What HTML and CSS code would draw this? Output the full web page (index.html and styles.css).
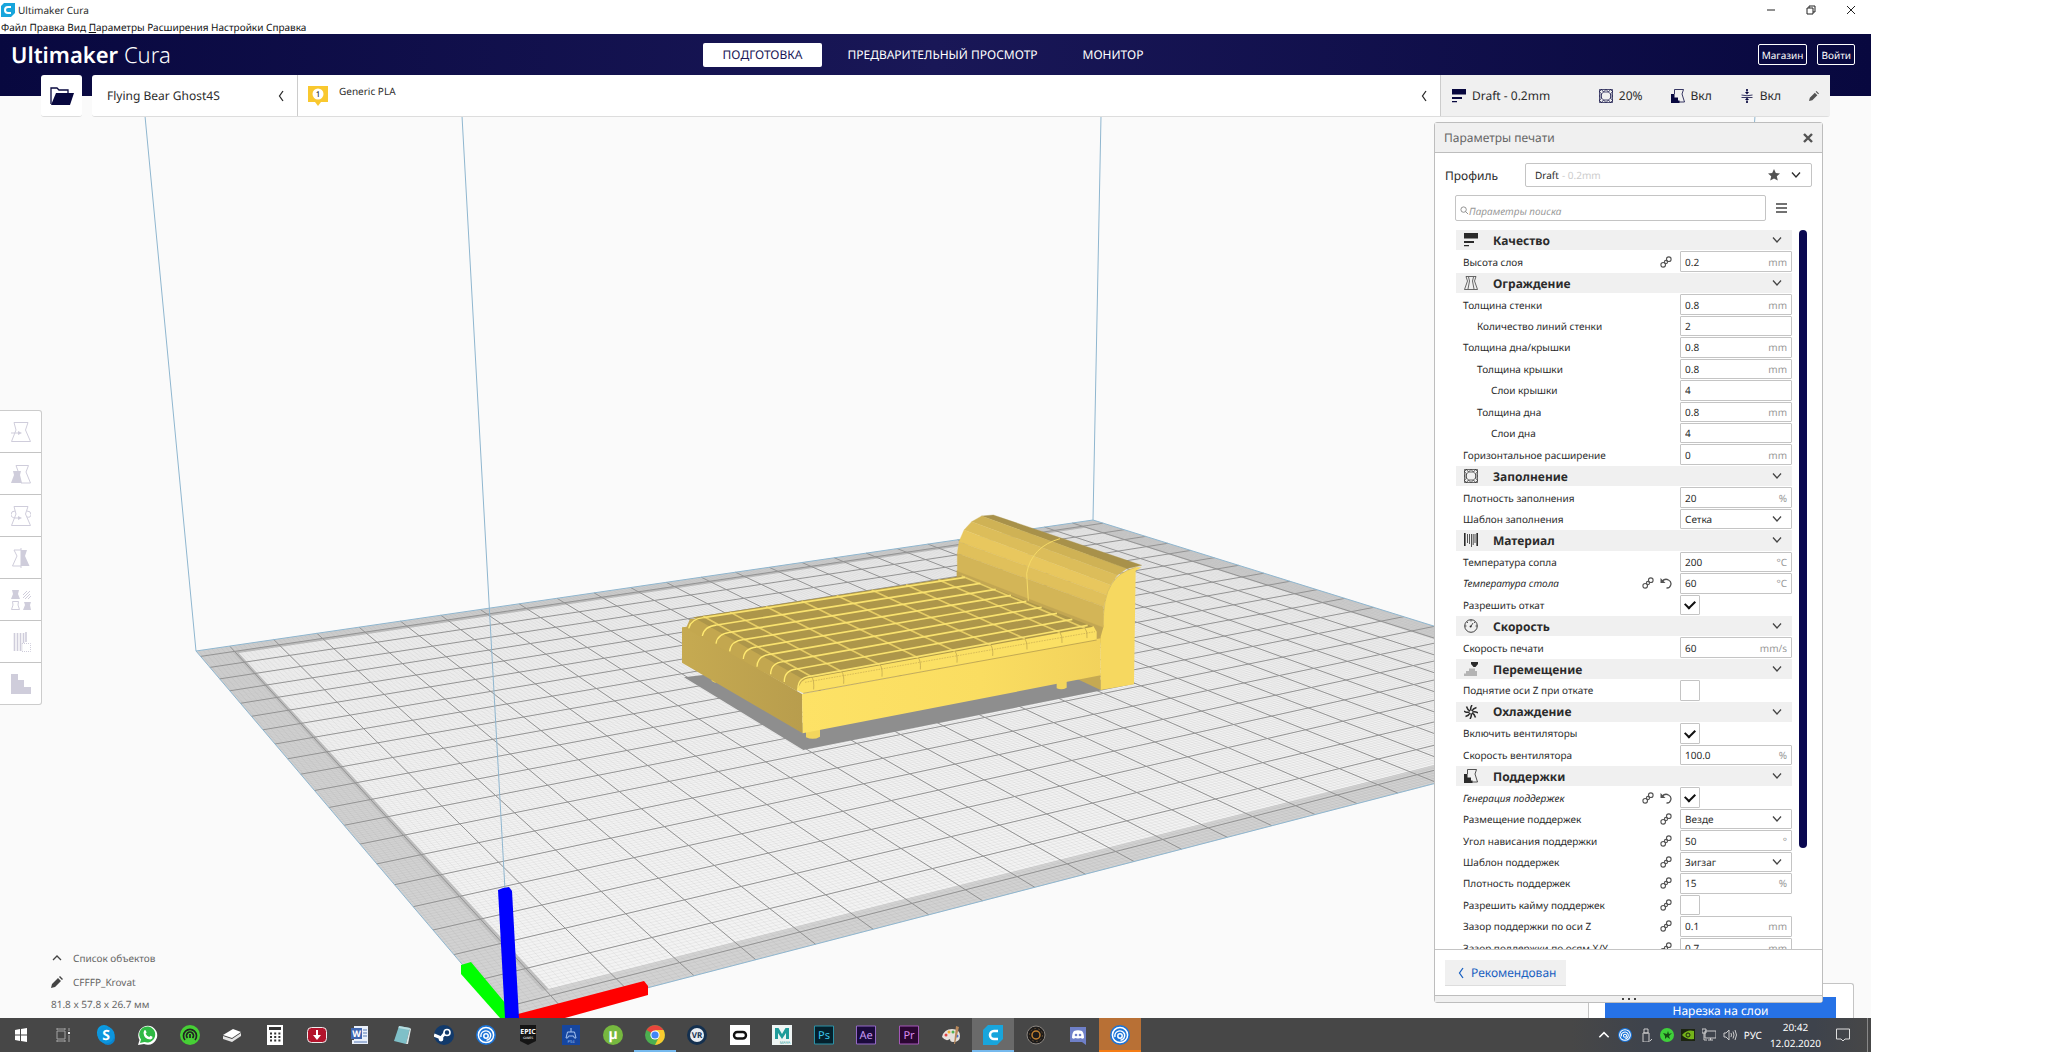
FILE: index.html
```html
<!DOCTYPE html>
<html lang="ru">
<head>
   <meta charset="UTF-8">
   <meta name="viewport" content="width=device-width, initial-scale=1.0">
   <title>Ultimaker Cura</title>
   <link rel="stylesheet" href="styles.css">
</head>
<body>
   <!-- Shared icons -->
   <svg class="sprite" aria-hidden="true">
       <symbol id="i-down" viewBox="0 0 12 12"><path d="M2 3.500l4 4.500 4-4.500" fill="none" stroke="currentColor" stroke-width="1.300"/></symbol>
       <symbol id="i-up" viewBox="0 0 12 12"><path d="M2 8l4-4 4 4" fill="none" stroke="currentColor" stroke-width="1.300"/></symbol>
       <symbol id="i-left" viewBox="0 0 12 12"><path d="M8 1L4.500 6l3.500 5" fill="none" stroke="currentColor" stroke-width="1.300"/></symbol>
       <symbol id="i-layers" viewBox="0 0 14 14"><path d="M0 0h14v5.500H0zM0 8h10v2H0zM0 12h5v1.200H0z" fill="currentColor"/></symbol>
       <symbol id="i-shell" viewBox="0 0 14 14"><path d="M2 .5h10L10.500 5l3 8.500H.5l3-8.500zM4.500 1L5.500 5 4 13M9.500 1l-1 4L10 13" fill="none" stroke="currentColor" stroke-width=".7"/></symbol>
       <symbol id="i-infill" viewBox="0 0 14 14"><path d="M.5.5h13v13H.5zM4.500 3h5L11.500 5v4L9.500 11h-5L2.500 9V5zM.5 2.500L2.500.5M11.500.5l2 2M.5 11.500l2 2M13.500 11.500l-2 2M2.500.5l2 2.500M7 .5L4.500 3M7 .5L9.500 3M11.500.5l-2 2.500M.5 2.500l2 2.500M.5 7l2-2M.5 7l2 2M.5 11.500l2-2.500M13.500 2.500l-2 2.500M13.500 7l-2-2M13.500 7l-2 2M13.500 11.500l-2-2.500M2.500 13.500l2-2.500M7 13.500L4.500 11M7 13.500L9.500 11M11.500 13.500l-2-2.500" fill="none" stroke="currentColor" stroke-width=".7"/></symbol>
       <symbol id="i-material" viewBox="0 0 14 14"><path d="M.8 0v13M13.200 0v13" stroke="currentColor" stroke-width="1.600"/><path d="M3.500 1v9M5.500 1v10M7.500 1v13M9.200 1v11M11 1v9" stroke="currentColor" stroke-width=".8"/></symbol>
       <symbol id="i-speed" viewBox="0 0 14 14"><circle cx="7" cy="7" r="6.300" fill="none" stroke="currentColor" stroke-width=".9"/><path d="M6.500 8l2.500-4M7 1v1.500M1 7h1.500M11.500 7H13M3 3l1 1M11 3l-1 1" stroke="currentColor" stroke-width=".8"/><circle cx="6.600" cy="7.500" r="1" fill="currentColor"/></symbol>
       <symbol id="i-travel" viewBox="0 0 14 14"><path d="M7 0h7v2l-2.500 3h-2L7 2z" fill="currentColor"/><path d="M0 14v-2.500h2V9h3V6.500h6V9h2v5z" fill="#b4b4b4"/></symbol>
       <symbol id="i-fan" viewBox="0 0 14 14"><path d="M7 5.500Q6 3 8 0M8 6q1-2.500 4.500-3.500M8.500 7q2.500-1 5.500 1M8 8q2.500 1 3.500 4.500M7 8.500q1 2.500-1 5.500M6 8q-1 2.500-4.500 3.500M5.500 7Q3 8 0 6M6 6Q3.500 5 2.500 1.500" fill="none" stroke="currentColor" stroke-width="1.500"/></symbol>
       <symbol id="i-support" viewBox="0 0 14 14"><path d="M3.500 5V.5h9L11 5l2.500 8H8" fill="none" stroke="currentColor" stroke-width=".8"/><path d="M0 5h3.500v3.500H7v3h1.500V14H0z" fill="currentColor"/></symbol>
       <symbol id="i-adhesion" viewBox="0 0 14 14"><path d="M7 0v4M7 10v4M1.500 6q5.500 1.500 11 0M1.500 8.500h11" fill="none" stroke="currentColor" stroke-width=".8"/><path d="M5 3h4L7 5.500zM5 11h4L7 8.500z" fill="currentColor"/><circle cx="7" cy="1" r="1" fill="currentColor"/><circle cx="7" cy="13" r="1" fill="currentColor"/></symbol>
       <symbol id="i-link" viewBox="0 0 12 12"><g fill="none" stroke="currentColor" stroke-width="1.100"><circle cx="3.200" cy="8.800" r="2.300"/><circle cx="8.800" cy="3.200" r="2.300"/><circle cx="6" cy="6" r="1.600"/></g></symbol>
       <symbol id="i-undo" viewBox="0 0 12 12"><path d="M2 4.500Q5 1 8.500 3a4.200 4.200 0 0 1-2 8" fill="none" stroke="currentColor" stroke-width="1.300"/><path d="M.5 1v5h5z" fill="currentColor"/></symbol>
       <symbol id="i-pencil" viewBox="0 0 12 12"><path d="M0 12l1-4 6-6 3 3-6 6zM8 1l1-1 3 3-1 1z" fill="currentColor"/></symbol>
       <symbol id="i-ubi" viewBox="0 0 20 20"><circle cx="10" cy="10" r="10" fill="#1b74d8"/><g fill="none" stroke="#fff" stroke-width="1.500"><circle cx="10" cy="10" r="7.600"/><path d="M5 12a5 5 0 0 1 9.500-3 5 5 0 0 1-4 6.300"/><circle cx="10" cy="11" r="2.200"/></g></symbol>
   </svg>

   <div class="app">
       <!-- 3D view: the lines of the plate and the mattress come from script.js -->
       <svg class="scene" viewBox="0 0 1871 1018" preserveAspectRatio="xMidYMid slice" aria-hidden="true">
           <polygon id="plate" fill="#d2d2d2"/>
           <polygon id="plateShade" fill="#c2c2c2"/>
           <polygon id="plateInner" fill="#f3f3f3"/>
           <path id="minor" class="minor"/>
           <path id="major" class="major"/>
           <polygon id="plateEdge" class="volume"/>
           <g transform="translate(660 490) scale(.33333)">
               <polygon points="72,562 155,552 430,700 1230,560 1432,580 430,780" fill="#8e8e8e"/>
               <path d="M155 566l12 8v5l-12-6zM438 715h42v25q-20 12-42 2zM1190 565h30v28q-14 8-30 2z" fill="#f3d65d"/>
               <polygon points="1250,566 1322,550 1322,600" fill="#c5a952"/>
               <polygon points="890,240 1332,405 1332,460 1290,455 890,275" fill="#c2a652"/>
               <polygon points="66,412 80,410 426,612 428,730 66,518" fill="url(#sideFill)"/>
               <polygon points="426,612 1322,445 1322,556 428,730" fill="url(#frontFill)"/>
               <polygon points="130,383 90,387 78,415 410,603 455,560" fill="#c3a74f"/>
               <polygon points="455,555 1300,408 1310,425 1310,450 430,610 410,600 425,575" fill="#fbe064"/>
               <path d="M430 610L1310 450" stroke="#a8904a" stroke-width="2"/>
               <path d="M435 577L1305 425" stroke="#c5a952" stroke-width="2" stroke-dasharray="5 3"/>
               <polygon points="100,382 905,258 1300,410 430,568" fill="#ad964a"/>
               <path id="cross" fill="none" stroke="#e6cc64" stroke-width="5"/>
               <path id="quilt" fill="none" stroke="#f9e26e" stroke-width="5"/>
               <path id="seams" fill="none" stroke="#b79d4c" stroke-width="2"/>
               <path id="folds" fill="none" stroke="#ffe970" stroke-width="4"/>
               <g id="headboard"></g>
               <path d="M1105 332L1100 250Q1115 170 1200 146" fill="none" stroke="#f5db68" stroke-width="3"/>
               <path d="M1322 600V440l8-28q-2-90 25-130 20-35 72-50h18l-18 10-5 341z" fill="#f6d860"/>
               <path d="M1330 412q-2-90 25-130 20-35 72-50" fill="none" stroke="#d2b557" stroke-width="2"/>
           </g>
           <defs>
               <linearGradient id="sideFill"><stop offset="0" stop-color="#c6aa51"/><stop offset="1" stop-color="#b89d4d"/></linearGradient>
               <linearGradient id="frontFill"><stop offset="0" stop-color="#fde266"/><stop offset=".6" stop-color="#fadd61"/><stop offset="1" stop-color="#f2d25c"/></linearGradient>
           </defs>
           <path class="volume" d="M196 651L145 116M505 890L462 116M1093 520L1101 116M1710 712L1755 116"/>
           <polygon points="461,965 471,962 506,1004 506,1018 500,1018 461,974" fill="#0f0"/>
           <polygon points="518,1014 644,981 648,986 648,995 565,1018 518,1018" fill="red"/>
           <polygon points="498,890 503,888 509,887 512,891 519,1018 505,1018" fill="#00f"/>
       </svg>

       <!-- Window title and menu -->
       <div class="titlebar">
           <svg class="logo" viewBox="0 0 14 14"><path d="M3 0h11v10l-4 4H0V3z" fill="#18a5dc"/><path d="M10 4H7a3 3 0 0 0 0 6h3" fill="none" stroke="#fff" stroke-width="2"/></svg>
           <span>Ultimaker Cura</span>
           <div class="window-buttons">
               <button aria-label="Свернуть"><svg viewBox="0 0 10 10"><path d="M1 5h8"/></svg></button>
               <button aria-label="Развернуть"><svg viewBox="0 0 10 10"><path d="M1 3h6v6H1zM3 3V1h6v6H7"/></svg></button>
               <button aria-label="Закрыть"><svg viewBox="0 0 10 10"><path d="M1 1l8 8M9 1L1 9"/></svg></button>
           </div>
       </div>
       <nav class="menu">
           <a href="#">Файл</a> <a href="#">Правка</a> <a href="#">Вид</a> <a href="#"><u>П</u>араметры</a> <a href="#">Расширения</a> <a href="#">Настройки</a> <a href="#">Справка</a>
       </nav>

       <header class="header">
           <div class="brand"><b>Ultimaker</b> Cura</div>
           <nav class="stages">
               <a class="active" href="#">ПОДГОТОВКА</a>
               <a href="#">ПРЕДВАРИТЕЛЬНЫЙ ПРОСМОТР</a>
               <a href="#">МОНИТОР</a>
           </nav>
           <div class="account">
               <button>Магазин</button>
               <button>Войти</button>
           </div>
       </header>

       <!-- Printer, material and print settings summary -->
       <div class="stagebar">
           <button class="open" aria-label="Открыть файл"><svg viewBox="0 0 24 18"><path d="M1 17V1h6l2 2h9v3" fill="none" stroke="#08083f" stroke-width="1.300"/><path d="M6 6h18l-4 12H1z" fill="#08083f"/></svg></button>
           <div class="stagecard">
               <button class="printer">Flying Bear Ghost4S <svg><use href="#i-left"/></svg></button>
               <button class="material">
                   <svg class="extruder" viewBox="0 0 20 20"><path d="M0 0h20v16h-7l-3 4-3-4H0z" fill="#f9c82f"/><circle cx="10" cy="8" r="5.500" fill="#fff"/><text x="10" y="11" text-anchor="middle">1</text></svg>
                   <span>Generic PLA</span>
                   <svg><use href="#i-left"/></svg>
               </button>
               <button class="summary">
                   <span class="profile-item"><svg><use href="#i-layers"/></svg>Draft - 0.2mm</span>
                   <span><svg><use href="#i-infill"/></svg>20%</span>
                   <span><svg><use href="#i-support"/></svg>Вкл</span>
                   <span><svg><use href="#i-adhesion"/></svg>Вкл</span>
                   <svg class="pencil"><use href="#i-pencil"/></svg>
               </button>
           </div>
       </div>

       <!-- Tools on the left -->
       <div class="tools">
           <button aria-label="Перемещение"><svg viewBox="0 0 20 20"><path d="M3 .5h14L14.500 8l5 11.500H.5L5 8z"/><path d="M0 11h9"/><path class="fill" d="M7 9l4 2-4 2z"/></svg></button>
           <button aria-label="Масштаб"><svg viewBox="0 0 20 20"><path d="M5 1.500h12.500L15 8l4.500 11H10M5 1.500L7 7"/><path class="fill" d="M2 7h8L9 11l2 8H0l3-8z"/></svg></button>
           <button aria-label="Поворот"><svg viewBox="0 0 20 20"><path d="M3 .5h14L14.500 8l5 11.500H.5L5 8zM4 5Q0 5 0 8.500T5 12h4M16 5q4 0 4 3.500T16 11"/><path class="fill" d="M7 10l4 2-4 2z"/></svg></button>
           <button aria-label="Зеркало"><svg viewBox="0 0 20 20"><path d="M10 0v20M10 2H3l3 6-4.500 10H10"/><path class="fill" d="M10 2h6l-2 6 4.500 10H10z"/></svg></button>
           <button aria-label="Параметры модели"><svg viewBox="0 0 20 20"><path class="fill" d="M1 0h7L7 4l2 5H0l2-5zM13 12h7l-1 3 1 5h-8l2-5z"/><path d="M1.500 11.500h6L7 15l1.500 4.500h-8L2 15zM12 5l4-4M12 8l7-7M14 9l5-5M17 9l3-3"/></svg></button>
           <button aria-label="Блокировка поддержек"><svg viewBox="0 0 20 20"><path d="M3.500 1v18M6.500 1v18M9.500 1v18M12.500 1v10M15 0v10" stroke-width="1.600"/><path d="M11 11.500h8.500v8H11z" stroke-dasharray="1 1"/></svg></button>
           <button aria-label="Поддержки"><svg viewBox="0 0 20 20"><path class="fill" d="M0 0h7v6h6v7h7v7H0z"/></svg></button>
       </div>

       <div class="objects">
           <button><svg><use href="#i-up"/></svg>Список объектов</button>
           <button><svg><use href="#i-pencil"/></svg>CFFFP_Krovat</button>
           <p>81.8 x 57.8 x 26.7 мм</p>
       </div>

       <div class="slice">
           <button>Нарезка на слои</button>
       </div>

       <!-- Print settings window -->
       <section class="panel">
           <div class="panel-title">
               <h2>Параметры печати</h2>
               <button aria-label="Закрыть"><svg viewBox="0 0 10 10"><path d="M1 1l8 8M9 1L1 9" stroke="#535353" stroke-width="2.400"/></svg></button>
           </div>
           <div class="profile">
               <label for="profile">Профиль</label>
               <div class="combo">
                   <select id="profile"><option>Draft</option></select>
                   <span>- 0.2mm</span>
                   <svg class="star" viewBox="0 0 12 12"><path d="M6 0l1.800 4 4.200.4-3.200 2.900 1 4.300L6 9.400l-3.800 2.200 1-4.300L0 4.400 4.200 4z" fill="#535353"/></svg>
                   <svg><use href="#i-down"/></svg>
               </div>
           </div>
           <div class="search">
               <div class="searchbox">
                   <svg viewBox="0 0 10 10"><circle cx="4" cy="4" r="3" fill="none" stroke="#888"/><path d="M6 6l3 3" stroke="#888"/></svg>
                   <input type="text" placeholder="Параметры поиска" aria-label="Параметры поиска">
               </div>
               <button aria-label="Видимость параметров"><svg viewBox="0 0 12 12"><path d="M0 2h11M0 6h11M0 10h11" stroke="#444" stroke-width="1.500"/></svg></button>
           </div>
           <div class="viewport">
               <div class="settings" id="settings"></div>
               <div class="scrollbar"><div class="thumb"></div></div>
           </div>
           <div class="panel-footer">
               <button><svg><use href="#i-left"/></svg>Рекомендован</button>
           </div>
           <div class="grip"><i></i><i></i><i></i></div>
       </section>
   </div>

   <!-- Windows taskbar -->
   <footer class="taskbar">
       <div class="apps">
           <button aria-label="Пуск"><svg viewBox="0 0 20 20"><path d="M4 5l5-1v5.500H4zM10 4l6-1v6.500h-6zM4 10.500h5V16l-5-1zM10 10.500h6V17l-6-1z" fill="#fff"/></svg></button>
           <button aria-label="Представление задач"><svg viewBox="0 0 20 20"><path d="M4 6h8v8H4zM4 3v2M12 3v2M4 15v2M12 15v2M4 4h8M4 16h8M16 3v3M16 10v7" fill="none" stroke="#a5a5a5"/><path d="M15 7h2v2h-2z" fill="#eee"/></svg></button>
           <button aria-label="Skype"><svg viewBox="0 0 20 20"><rect x="1" width="14" height="15" rx="7" fill="#0a9de3"/><rect x="5" y="5" width="14" height="15" rx="7" fill="#0a84cf"/><circle cx="10" cy="10" r="8.500" fill="#0c95dd"/><text x="10" y="15" font-size="14" text-anchor="middle" fill="#fff" font-weight="700">S</text></svg></button>
           <button aria-label="WhatsApp"><svg viewBox="0 0 20 20"><path d="M0 20l1.500-5A9.500 9.500 0 1 1 6 19z" fill="#fff"/><path d="M2 18l1-3.500A8 8 0 1 1 6.500 17z" fill="#2fb944"/><path d="M6 6q1-2 2 0l.6 1.500-1 1.200q1.200 2.300 3.600 3.300l1.300-1.300 2 1q.5 2-2 2.800Q6 14 5.500 8z" fill="#fff"/></svg></button>
           <button aria-label="Razer Cortex"><svg viewBox="0 0 20 20"><circle cx="10" cy="10" r="10" fill="#46cf35"/><path d="M5 15a6.500 6.500 0 1 1 10 0M7.500 13a3.500 3.500 0 1 1 5 0M10 9v4" fill="none" stroke="#222" stroke-width="1.700"/></svg></button>
           <button aria-label="Хранилище"><svg viewBox="0 0 20 20"><path d="M1 10l10-6 8 3-9 6z" fill="#fff"/><path d="M1 11l9 3 9-6v3l-9 6-9-3z" fill="#e4e4e4"/></svg></button>
           <button aria-label="Калькулятор"><svg viewBox="0 0 20 20"><path d="M2 0h16v20H2z" fill="#fff"/><path d="M4 2h12v3H4z" fill="#333"/><path d="M5 8.500h11M5 12h11M5 15.500h11" stroke="#333" stroke-width="2" stroke-dasharray="2 2.200"/></svg></button>
           <button aria-label="Загрузки"><svg viewBox="0 0 20 20"><rect x=".5" y="2.500" width="19" height="15" rx="4" fill="#b3142c" stroke="#eee"/><path d="M9 5h2v5h3l-4 5-4-5h3z" fill="#fff"/></svg></button>
           <button aria-label="Word"><svg viewBox="0 0 20 20"><path d="M5 1h14v18H3v-4h2z" fill="#eaf0fa"/><path d="M14 5h4M14 8h4M14 11h4M5 17h13" stroke="#5678b5"/><path d="M2 3h11v11H2z" fill="#3f66b0"/><text x="7.500" y="12" font-size="9" text-anchor="middle" fill="#fff" font-weight="700">W</text></svg></button>
           <button aria-label="Блокнот"><svg viewBox="0 0 20 20"><path d="M7 1l11 2-4 16-12-3z" fill="#7fc0c8"/><path d="M14 19l4-16 1 1-3 15z" fill="#dfe9e9"/><path d="M7 1l11 2-.5 2L6.500 3z" fill="#b8dde0"/></svg></button>
           <button aria-label="Steam"><svg viewBox="0 0 20 20"><circle cx="10" cy="10" r="10" fill="#123a6b"/><path d="M0 10l7 3 4-5" fill="none" stroke="#fff" stroke-width="3"/><circle cx="13" cy="7.500" r="3" fill="#123a6b" stroke="#fff" stroke-width="1.600"/><circle cx="7" cy="14" r="2.400" fill="#fff"/></svg></button>
           <button aria-label="Uplay"><svg><use href="#i-ubi"/></svg></button>
           <button aria-label="Epic Games"><svg viewBox="0 0 20 20"><path d="M2 0h16v16l-8 4-8-4z" fill="#151515"/><text x="10" y="9" font-size="7" text-anchor="middle" fill="#fff" font-weight="700">EPIC</text><text x="10" y="14" font-size="3" text-anchor="middle" fill="#fff">GAMES</text></svg></button>
           <button aria-label="PS4 Remote Play"><svg viewBox="0 0 20 20"><path d="M1 0h18v20H1z" fill="#1646a0"/><path d="M5 13l1.500-6h7l1.500 6q-2 1-2.500-2h-5Q7 14 5 13zM10 3v4" fill="none" stroke="#a8c4f0"/><text x="10" y="18" font-size="4" text-anchor="middle" fill="#a8c4f0">PS4</text></svg></button>
           <button aria-label="uTorrent"><svg viewBox="0 0 20 20"><circle cx="10" cy="10" r="10" fill="#76b83f"/><text x="10" y="14" font-size="14" text-anchor="middle" fill="#fff" font-weight="700">µ</text></svg></button>
           <button class="running" aria-label="Chrome"><svg viewBox="0 0 20 20"><circle cx="10" cy="10" r="10" fill="#4caf50"/><path d="M10 10L1.500 5A10 10 0 0 1 18.500 5z" fill="#e8453c"/><path d="M10 5h8.500A10 10 0 0 1 10 20l4-8z" fill="#f9cb2f"/><circle cx="10" cy="10" r="4.600" fill="#fff"/><circle cx="10" cy="10" r="3.600" fill="#4285f4"/></svg></button>
           <button aria-label="VR"><svg viewBox="0 0 20 20"><circle cx="10" cy="10" r="10" fill="#14304f"/><circle cx="10" cy="10" r="7" fill="#e8edf2"/><text x="10" y="13" font-size="8" text-anchor="middle" fill="#14304f" font-weight="700">VR</text></svg></button>
           <button aria-label="Oculus"><svg viewBox="0 0 20 20"><path d="M0 0h20v20H0z" fill="#fff"/><rect x="4" y="7" width="12" height="6.500" rx="3.200" fill="none" stroke="#111" stroke-width="2.400"/></svg></button>
           <button aria-label="Maya"><svg viewBox="0 0 20 20"><path d="M0 0h20v20H0z" fill="#eef4f3"/><path d="M3 14V3h3.500L10 9l3.500-6H17v11h-3V8l-4 6-4-6v6z" fill="#1f9b99"/><text x="13" y="19" font-size="4" text-anchor="middle" fill="#1f9b99">MAYA</text></svg></button>
           <button aria-label="Photoshop"><svg viewBox="0 0 20 20"><path d="M.5 1h19v18H.5z" fill="#04202c" stroke="#2a93a8"/><text x="10" y="14" font-size="11" text-anchor="middle" fill="#3cc5e8">Ps</text></svg></button>
           <button aria-label="After Effects"><svg viewBox="0 0 20 20"><path d="M.5 1h19v18H.5z" fill="#1b0a3c" stroke="#9468c8"/><text x="10" y="14" font-size="11" text-anchor="middle" fill="#c99cf5">Ae</text></svg></button>
           <button aria-label="Premiere"><svg viewBox="0 0 20 20"><path d="M.5 1h19v18H.5z" fill="#2b0632" stroke="#a455b8"/><text x="10" y="14" font-size="11" text-anchor="middle" fill="#d98cf0">Pr</text></svg></button>
           <button aria-label="Paint"><svg viewBox="0 0 20 20"><path d="M1 12Q3 4 11 4q8 0 8 7 0 6-7 6-3 0-3-3-4 3-8-2z" fill="#e6e1dc"/><circle cx="5" cy="10" r="1.500" fill="#e04040"/><circle cx="8" cy="7" r="1.500" fill="#f0b030"/><circle cx="12" cy="7" r="1.500" fill="#50b050"/><circle cx="16" cy="11" r="1.500" fill="#4070d0"/><path d="M15 1l3 1-4 17h-1z" fill="#b9885a"/></svg></button>
           <button class="running current" aria-label="Cura"><svg viewBox="0 0 20 20"><path d="M5 0h15v14l-6 6H0V5z" fill="#18a5dc"/><path d="M15 6h-4a4 4 0 0 0 0 8h4" fill="none" stroke="#fff" stroke-width="2.600"/></svg></button>
           <button aria-label="Камера"><svg viewBox="0 0 20 20"><circle cx="10" cy="10" r="9" fill="#1d1b1a" stroke="#8a8580"/><circle cx="10" cy="10" r="4" fill="none" stroke="#c08030" stroke-width="1.500"/><circle cx="10" cy="10" r="6.500" fill="none" stroke="#5a4630" stroke-dasharray="2 2"/></svg></button>
           <button aria-label="Discord"><svg viewBox="0 0 20 20"><path d="M2 2h16v18l-4-3H2z" fill="#6f80c8"/><path d="M4 13q0-5 2-7 4-1.500 8 0 2 2 2 7-2 1.500-3 0-3 .8-6 0-1 1.500-3 0z" fill="#fff"/><circle cx="8" cy="10" r="1.300" fill="#6f80c8"/><circle cx="12" cy="10" r="1.300" fill="#6f80c8"/></svg></button>
           <button class="alert" aria-label="Uplay"><svg><use href="#i-ubi"/></svg></button>
       </div>
       <div class="tray">
           <button aria-label="Скрытые значки"><svg><use href="#i-up"/></svg></button>
           <button aria-label="Uplay"><svg><use href="#i-ubi"/></svg></button>
           <button aria-label="USB"><svg viewBox="0 0 14 14"><path d="M4 5h6v9H4zM5 1h4v4H5zM11 13l2-2" fill="none" stroke="#ccc"/></svg></button>
           <button aria-label="Razer"><svg viewBox="0 0 14 14"><circle cx="7" cy="7" r="7" fill="#3fd03a"/><path d="M3 5l4 1 1-3 1 3 3-1-3 3 1 3-3-2-2 2V8z" fill="#164d14"/></svg></button>
           <button aria-label="NVIDIA"><svg viewBox="0 0 14 14"><path d="M0 1h14v12H0z" fill="#1c2410"/><path d="M1 7q5-6 12-4v8Q5 12 1 7z" fill="#74b21a"/><circle cx="7" cy="7" r="2" fill="none" stroke="#1c2410"/></svg></button>
           <button aria-label="Сеть"><svg viewBox="0 0 14 14"><path d="M3 3h11v7H3zM6 12h5M8.500 10v2M0 1h4v4H0zM2 5v7h3" fill="none" stroke="#ccc"/></svg></button>
           <button aria-label="Звук"><svg viewBox="0 0 14 14"><path d="M1 5h2l3-3v10L3 9H1zM8 5q1 2 0 4M10 3.500q2 3.500 0 7M12 2q3 5 0 10" fill="none" stroke="#ccc"/></svg></button>
           <button class="lang">РУС</button>
           <button class="clock"><span>20:42</span><span>12.02.2020</span></button>
           <button class="notes" aria-label="Уведомления"><svg viewBox="0 0 14 14"><path d="M.5 1h13v10H9l-2 2-2-2H.5z" fill="none" stroke="#ddd"/></svg></button>
       </div>
   </footer>
   <script src="script.js"></script>
</body>
</html>
```
FILE: styles.css
```css
* {
    box-sizing: border-box;
}

body {
    margin: 0;
    padding-right: 177px;
    height: 100vh;
    display: flex;
    flex-direction: column;
    background-color: #fff;
    font-family: "Noto Sans", "Open Sans", sans-serif;
    font-size: 12px;
    text-rendering: geometricPrecision;
    color: #2b2b2b;
}

button,
input,
select {
    font: inherit;
    color: inherit;
    text-rendering: inherit;
    background: none;
    border: none;
    padding: 0;
    margin: 0;
}

button,
select {
    cursor: pointer;
}

a {
    color: inherit;
    text-decoration: none;
}

svg {
    display: block;
    flex: none;
    width: 12px;
    height: 12px;
}

.sprite {
    position: absolute;
    width: 0;
    height: 0;
}

.app {
    position: relative;
    flex: 1;
    min-height: 0;
    overflow: hidden;
    background-color: #fafafa;
}

/* 3D view behind everything */
.scene {
    position: absolute;
    inset: 0;
    width: 100%;
    height: 100%;
}

.minor {
    fill: none;
    stroke: #8c8c8c;
    stroke-width: 1;
    opacity: .1;
}

.major {
    fill: none;
    stroke: #939393;
    stroke-width: 1;
}

.volume {
    fill: none;
    stroke: #8fb6cf;
    stroke-width: 1;
}

/* Title and menu */
.titlebar {
    position: relative;
    display: flex;
    align-items: center;
    gap: 3px;
    height: 20px;
    padding-left: 1px;
    background-color: #fff;
    font-size: 10px;
}

.titlebar .logo {
    width: 14px;
    height: 14px;
}

.window-buttons {
    display: flex;
    margin-left: auto;
}

.window-buttons button {
    width: 40px;
    height: 20px;
    display: flex;
    align-items: center;
    justify-content: center;
}

.window-buttons svg {
    width: 10px;
    height: 10px;
    fill: none;
    stroke: #222;
    stroke-width: 1;
}

.menu {
    position: relative;
    height: 14px;
    padding-left: 1px;
    line-height: 14px;
    background-color: #fff;
    font-size: 10px;
    color: #111;
}

/* Dark header */
.header {
    position: relative;
    display: flex;
    align-items: center;
    justify-content: space-between;
    height: 62px;
    padding: 0 16px 21px 11px;
    background: linear-gradient(90deg, #08083f, #191757 50%, #08083f);
    color: #fff;
}

.brand {
    flex: 1;
    font-size: 22px;
    font-weight: 300;
    line-height: 38px;
}

.brand b {
    font-weight: 600;
}

.stages {
    display: flex;
    gap: 5px;
}

.stages a {
    height: 24px;
    padding: 0 20px;
    line-height: 24px;
    border-radius: 2px;
}

.stages .active {
    background-color: #fff;
    color: #191757;
}

.account {
    flex: 1;
    display: flex;
    justify-content: flex-end;
    gap: 10px;
}

.account button {
    height: 21px;
    padding: 0 3px;
    border: 1px solid #fff;
    border-radius: 2px;
    font-size: 10px;
}

/* Stage bar over the header's lower edge */
.stagebar {
    position: relative;
    display: flex;
    gap: 10px;
    height: 42px;
    margin: -21px 41px 0;
}

.open {
    width: 41px;
    border-radius: 3px;
    background-color: #fff;
    border-bottom: 1px solid #ddd;
}

.open svg {
    width: 24px;
    height: 18px;
    margin: auto;
}

.stagecard {
    flex: 1;
    display: flex;
    border-radius: 3px;
    border-bottom: 1px solid #ddd;
    background-color: #fff;
}

.printer {
    display: flex;
    align-items: center;
    justify-content: space-between;
    width: 206px;
    padding: 0 10px 0 15px;
    border-right: 1px solid #ccc;
}

.material {
    flex: 1;
    display: flex;
    align-items: center;
    gap: 11px;
    padding: 0 10px;
    border-right: 1px solid #ccc;
    font-size: 10px;
}

.material span {
    align-self: flex-start;
    margin-top: 9px;
}

.material > svg:last-child {
    margin-left: auto;
}

.extruder {
    width: 20px;
    height: 20px;
}

.extruder text {
    font-size: 8px;
}

.summary {
    display: flex;
    align-items: center;
    gap: 28px;
    width: 389px;
    padding: 0 11px;
    background-color: #f0f0f0;
}

.summary span {
    display: flex;
    align-items: center;
    gap: 6px;
}

.summary span svg {
    width: 14px;
    height: 14px;
    color: #08083f;
}

.summary .profile-item {
    margin-right: auto;
}

.summary .pencil {
    width: 10px;
    height: 10px;
    color: #535353;
}

/* Tools */
.tools {
    position: absolute;
    left: 0;
    top: 410px;
    width: 42px;
    border: 1px solid #ccc;
    border-left: none;
    border-radius: 0 3px 3px 0;
    background-color: #fff;
}

.tools button {
    display: flex;
    align-items: center;
    justify-content: center;
    width: 100%;
    height: 42px;
    border-bottom: 1px solid #c4c4c4;
}

.tools button:last-child {
    height: 41px;
    border-bottom: none;
}

.tools svg {
    width: 20px;
    height: 20px;
    fill: none;
    stroke: #cfcddb;
}

.tools .fill {
    fill: #cfcddb;
    stroke: none;
}

/* Object list */
.objects {
    position: absolute;
    left: 51px;
    bottom: 4px;
    font-size: 10px;
    color: #666;
}

.objects button {
    display: flex;
    align-items: center;
    gap: 10px;
    height: 24px;
}

.objects svg {
    color: #444;
}

.objects p {
    margin: 0;
    line-height: 20px;
}

.slice {
    position: absolute;
    right: 17px;
    bottom: 0;
    width: 266px;
    height: 35px;
    padding: 13px 17px 0 16px;
    border: 1px solid #c4c4c4;
    border-bottom: none;
    border-radius: 3px 3px 0 0;
    background-color: #fff;
}

.slice button {
    width: 100%;
    height: 26px;
    background-color: #2672e6;
    color: #fff;
}

/* Print settings panel */
.panel {
    position: absolute;
    top: 122px;
    right: 48px;
    bottom: 15px;
    width: 389px;
    display: flex;
    flex-direction: column;
    border: 1px solid #bdbdbd;
    border-radius: 3px;
    background-color: #fff;
}

.panel-title {
    display: flex;
    align-items: center;
    justify-content: space-between;
    height: 30px;
    padding: 0 9px;
    border-bottom: 1px solid #bdbdbd;
    background-color: #f0f0f0;
}

.panel-title h2 {
    margin: 0;
    font-size: 12px;
    font-weight: 400;
    color: #666;
}

.panel-title svg {
    width: 10px;
    height: 10px;
}

.profile {
    display: flex;
    align-items: center;
    height: 22px;
    margin: 11px 10px 0;
}

.profile label {
    width: 80px;
}

.combo {
    position: relative;
    flex: 1;
    display: flex;
    align-items: center;
    gap: 10px;
    height: 24px;
    padding-right: 9px;
    border: 1px solid #c4c4c4;
    border-radius: 2px;
    font-size: 10px;
}

.combo select {
    appearance: none;
    flex: 1;
    height: 100%;
    padding-left: 9px;
}

.combo span {
    position: absolute;
    left: 36px;
    color: #ccc;
}

.search {
    display: flex;
    align-items: center;
    gap: 10px;
    margin: 9px 34px 9px 20px;
}

.searchbox {
    flex: 1;
    display: flex;
    align-items: center;
    height: 26px;
    padding: 5px 4px 0;
    border: 1px solid #c4c4c4;
    border-radius: 2px;
}

.searchbox svg {
    width: 9px;
    height: 9px;
}

.searchbox input {
    flex: 1;
    height: 18px;
    font-size: 10px;
    font-style: italic;
    outline: none;
}

.searchbox input::placeholder {
    color: #999;
}

.viewport {
    flex: 1;
    min-height: 0;
    display: flex;
    gap: 7px;
    padding: 0 15px 0 21px;
    overflow: hidden;
    border-bottom: 1px solid #c4c4c4;
}

/* 34 equal rows, the last one is cut by the viewport */
.settings {
    flex: 1;
    display: grid;
    grid-template-rows: repeat(34, 1fr);
    height: calc(100% + 10px);
    font-size: 10px;
}

.category {
    display: flex;
    align-items: center;
    margin-bottom: 1px;
    padding: 0 9px 0 8px;
    background-color: #f0f0f0;
    font-size: 12px;
    font-weight: 700;
}

.category svg:first-child {
    width: 14px;
    height: 14px;
    margin-right: 15px;
}

.category svg:last-child {
    margin-left: auto;
    color: #444;
}

.setting {
    display: flex;
    align-items: center;
    gap: 6px;
    margin-bottom: 1px;
    padding-left: 7px;
}

.setting label {
    flex: 1;
}

.level-1 {
    padding-left: 21px;
}

.level-2 {
    padding-left: 35px;
}

.changed label {
    font-style: italic;
}

.setting > svg {
    color: #535353;
}

.control {
    display: flex;
    align-items: center;
    width: 112px;
    height: 100%;
    margin-left: 2px;
}

.field {
    padding: 0 4px;
    border: 1px solid #c4c4c4;
    border-radius: 1px;
}

.field input,
.field select {
    appearance: none;
    flex: 1;
    min-width: 0;
    outline: none;
}

.field svg {
    margin-right: 4px;
    color: #444;
}

.unit {
    color: #999;
}

.check {
    appearance: none;
    display: flex;
    align-items: center;
    justify-content: center;
    width: 20px;
    height: 100%;
    border: 1px solid #c4c4c4;
    border-radius: 1px;
}

.check:checked::before {
    content: "";
    width: 8px;
    height: 5px;
    margin-bottom: 2px;
    border: solid #111;
    border-width: 0 0 2px 2px;
    transform: rotate(-45deg);
}

.scrollbar {
    width: 8px;
}

.thumb {
    height: 86%;
    border-radius: 4px;
    background-color: #0a0850;
}

.panel-footer {
    height: 45px;
    padding: 10px;
}

.panel-footer button {
    display: flex;
    align-items: center;
    gap: 4px;
    height: 26px;
    padding: 0 10px;
    border-bottom: 1px solid #ddd;
    background-color: #f0f0f0;
    color: #1961c1;
}

.grip {
    display: flex;
    align-items: center;
    justify-content: center;
    gap: 4px;
    height: 7px;
    border-top: 1px solid #bdbdbd;
    background-color: #f0f0f0;
}

.grip i {
    width: 2px;
    height: 2px;
    background-color: #444;
}

/* Taskbar */
.taskbar {
    display: flex;
    justify-content: space-between;
    height: 34px;
    background: linear-gradient(90deg, #474747 84%, #3e434c 88%, #3e434c 97%, #474747);
    color: #fff;
}

.apps {
    display: flex;
    width: 61%;
}

.apps button {
    flex: 1;
    display: flex;
    align-items: center;
    justify-content: center;
    border-bottom: 2px solid transparent;
    border-top: 2px solid transparent;
}

.apps svg {
    width: 20px;
    height: 20px;
}

.apps .running {
    border-bottom-color: #76b9ed;
}

.apps .current {
    border-top-color: #6a6a6a;
    background-color: #6a6a6a;
}

.apps .alert {
    border-top-color: #b87035;
    border-bottom-color: #f57c14;
    background-color: #b87035;
}

.tray {
    display: flex;
    align-items: center;
    gap: 7px;
    margin-right: 3px;
    padding-right: 17px;
    border-right: 1px solid #888;
    font-size: 10px;
}

.tray svg {
    width: 14px;
    height: 14px;
}

.clock {
    display: flex;
    flex-direction: column;
    align-items: center;
    line-height: 16px;
    margin: 0 8px 0 1px;
}
```
FILE: script.js
```js
// Corners of the build plate on screen: near, right, far, left
const corners = [[512, 1023], [1710, 712], [1093, 520], [196, 651]];
const plateWidth = 255;
const plateDepth = 210;

// Maps the unit square to a quad in perspective
function projector([p0, p1, p2, p3]) {
    const dx1 = p1[0] - p2[0], dx2 = p3[0] - p2[0], sx = p0[0] - p1[0] + p2[0] - p3[0];
    const dy1 = p1[1] - p2[1], dy2 = p3[1] - p2[1], sy = p0[1] - p1[1] + p2[1] - p3[1];
    const det = dx1 * dy2 - dx2 * dy1;
    const g = (sx * dy2 - dx2 * sy) / det;
    const h = (dx1 * sy - sx * dy1) / det;
    return (u, v) => {
        const w = g * u + h * v + 1;
        const x = ((p1[0] - p0[0] + g * p1[0]) * u + (p3[0] - p0[0] + h * p3[0]) * v + p0[0]) / w;
        const y = ((p1[1] - p0[1] + g * p1[1]) * u + (p3[1] - p0[1] + h * p3[1]) * v + p0[1]) / w;
        return x.toFixed(1) + ',' + y.toFixed(1);
    };
}

const project = projector(corners);
const at = (x, y) => project(x / plateWidth, y / plateDepth);

// Lines every `step` mm, counted from the centre of the plate
function gridPath(step) {
    let d = '';
    for (let x = (plateWidth / 2) % step; x < plateWidth; x += step) {
        d += `M${at(x, 0)}L${at(x, plateDepth)}`;
    }
    for (let y = (plateDepth / 2) % step; y < plateDepth; y += step) {
        d += `M${at(0, y)}L${at(plateWidth, y)}`;
    }
    return d;
}

function rect(x1, y1, x2, y2) {
    return [at(x1, y1), at(x2, y1), at(x2, y2), at(x1, y2)].join(' ');
}

document.getElementById('plate').setAttribute('points', rect(0, 0, plateWidth, plateDepth));
document.getElementById('plateEdge').setAttribute('points', rect(0, 0, plateWidth, plateDepth));
document.getElementById('plateShade').setAttribute('points', rect(7, 7, 247, 205));
document.getElementById('plateInner').setAttribute('points', rect(8, 7, 247, 203));
document.getElementById('minor').setAttribute('d', gridPath(1));
document.getElementById('major').setAttribute('d', gridPath(10));

// Mattress: lines across the top, folds at the foot, seams at the side
const backX = [130, 210, 318, 425, 530, 635, 738, 835, 905];
const frontX = [455, 545, 660, 775, 885, 992, 1095, 1200, 1275];
let cross = '';
let seams = '';
backX.forEach((x, i) => {
    const fx = frontX[i];
    const backY = 258 + (905 - x) * 0.156;
    const frontY = 410 + (1300 - fx) * 0.178;
    cross += `M${x} ${backY}L${fx} ${frontY}`;
    seams += `M${fx} ${frontY}q8 10 6 ${38 - i}`;
});
let quilt = '';
let folds = '';
for (let i = 0; i <= 8; i++) {
    const x = 130 + i * 40, y = 383 + i * 22;
    const ex = 915 + i * 46, ey = 262 + i * 18;
    quilt += `M${x} ${y}L${ex} ${ey}`;
    folds += `M${x} ${y}q-38 4-${44 - i} ${32 + i}`;
}
document.getElementById('cross').setAttribute('d', cross);
document.getElementById('quilt').setAttribute('d', quilt);
document.getElementById('seams').setAttribute('d', seams);
document.getElementById('folds').setAttribute('d', folds);

// Headboard: flat bands between the left and the right profile
const leftProfile = [[1000, 75], [965, 78], [935, 95], [912, 120], [897, 155], [892, 190], [892, 243]];
const rightProfile = [[1445, 226], [1400, 236], [1372, 256], [1352, 285], [1340, 315], [1331, 350], [1330, 412]];
const bands = ['#a8914a', '#cfb255', '#dcbd5a', '#e8c75e', '#e0c05b', '#d3b557'];
bands.forEach((color, i) => {
    const points = [leftProfile[i], rightProfile[i], rightProfile[i + 1], leftProfile[i + 1]].join(' ');
    document.getElementById('headboard').innerHTML += `<polygon points="${points}" fill="${color}" stroke="${color}"/>`;
});

// Rows of the settings list
const rows = [
    { category: 'Качество', icon: 'layers' },
    { name: 'Высота слоя', value: '0.2', unit: 'mm', link: true },
    { category: 'Ограждение', icon: 'shell' },
    { name: 'Толщина стенки', value: '0.8', unit: 'mm' },
    { name: 'Количество линий стенки', value: '2', level: 1 },
    { name: 'Толщина дна/крышки', value: '0.8', unit: 'mm' },
    { name: 'Толщина крышки', value: '0.8', unit: 'mm', level: 1 },
    { name: 'Слои крышки', value: '4', level: 2 },
    { name: 'Толщина дна', value: '0.8', unit: 'mm', level: 1 },
    { name: 'Слои дна', value: '4', level: 2 },
    { name: 'Горизонтальное расширение', value: '0', unit: 'mm' },
    { category: 'Заполнение', icon: 'infill' },
    { name: 'Плотность заполнения', value: '20', unit: '%' },
    { name: 'Шаблон заполнения', option: 'Сетка' },
    { category: 'Материал', icon: 'material' },
    { name: 'Температура сопла', value: '200', unit: '°C' },
    { name: 'Температура стола', value: '60', unit: '°C', link: true, changed: true },
    { name: 'Разрешить откат', checked: true },
    { category: 'Скорость', icon: 'speed' },
    { name: 'Скорость печати', value: '60', unit: 'mm/s' },
    { category: 'Перемещение', icon: 'travel' },
    { name: 'Поднятие оси Z при откате', checked: false },
    { category: 'Охлаждение', icon: 'fan' },
    { name: 'Включить вентиляторы', checked: true },
    { name: 'Скорость вентилятора', value: '100.0', unit: '%' },
    { category: 'Поддержки', icon: 'support' },
    { name: 'Генерация поддержек', checked: true, link: true, changed: true },
    { name: 'Размещение поддержек', option: 'Везде', link: true },
    { name: 'Угол нависания поддержки', value: '50', unit: '°', link: true },
    { name: 'Шаблон поддержек', option: 'Зигзаг', link: true },
    { name: 'Плотность поддержек', value: '15', unit: '%', link: true },
    { name: 'Разрешить кайму поддержек', checked: false, link: true },
    { name: 'Зазор поддержки по оси Z', value: '0.1', unit: 'mm', link: true },
    { name: 'Зазор поддержки по осям X/Y', value: '0.7', unit: 'mm', link: true }
];

const icon = name => `<svg><use href="#i-${name}"/></svg>`;

function control(row, id) {
    if ('checked' in row) {
        return `<div class="control"><input class="check" type="checkbox" id="${id}" ${row.checked ? 'checked' : ''}></div>`;
    }
    if (row.option) {
        return `<div class="control field"><select id="${id}"><option>${row.option}</option></select>${icon('down')}</div>`;
    }
    return `<div class="control field"><input type="text" id="${id}" value="${row.value}"><span class="unit">${row.unit || ''}</span></div>`;
}

document.getElementById('settings').innerHTML = rows.map((row, i) => {
    if (row.category) {
        return `<button class="category">${icon(row.icon)}${row.category}${icon('down')}</button>`;
    }
    const id = 'setting' + i;
    return `<div class="setting level-${row.level || 0} ${row.changed ? 'changed' : ''}">
        <label for="${id}">${row.name}</label>
        ${row.link ? icon('link') : ''}${row.changed ? icon('undo') : ''}
        ${control(row, id)}
    </div>`;
}).join('');
```
